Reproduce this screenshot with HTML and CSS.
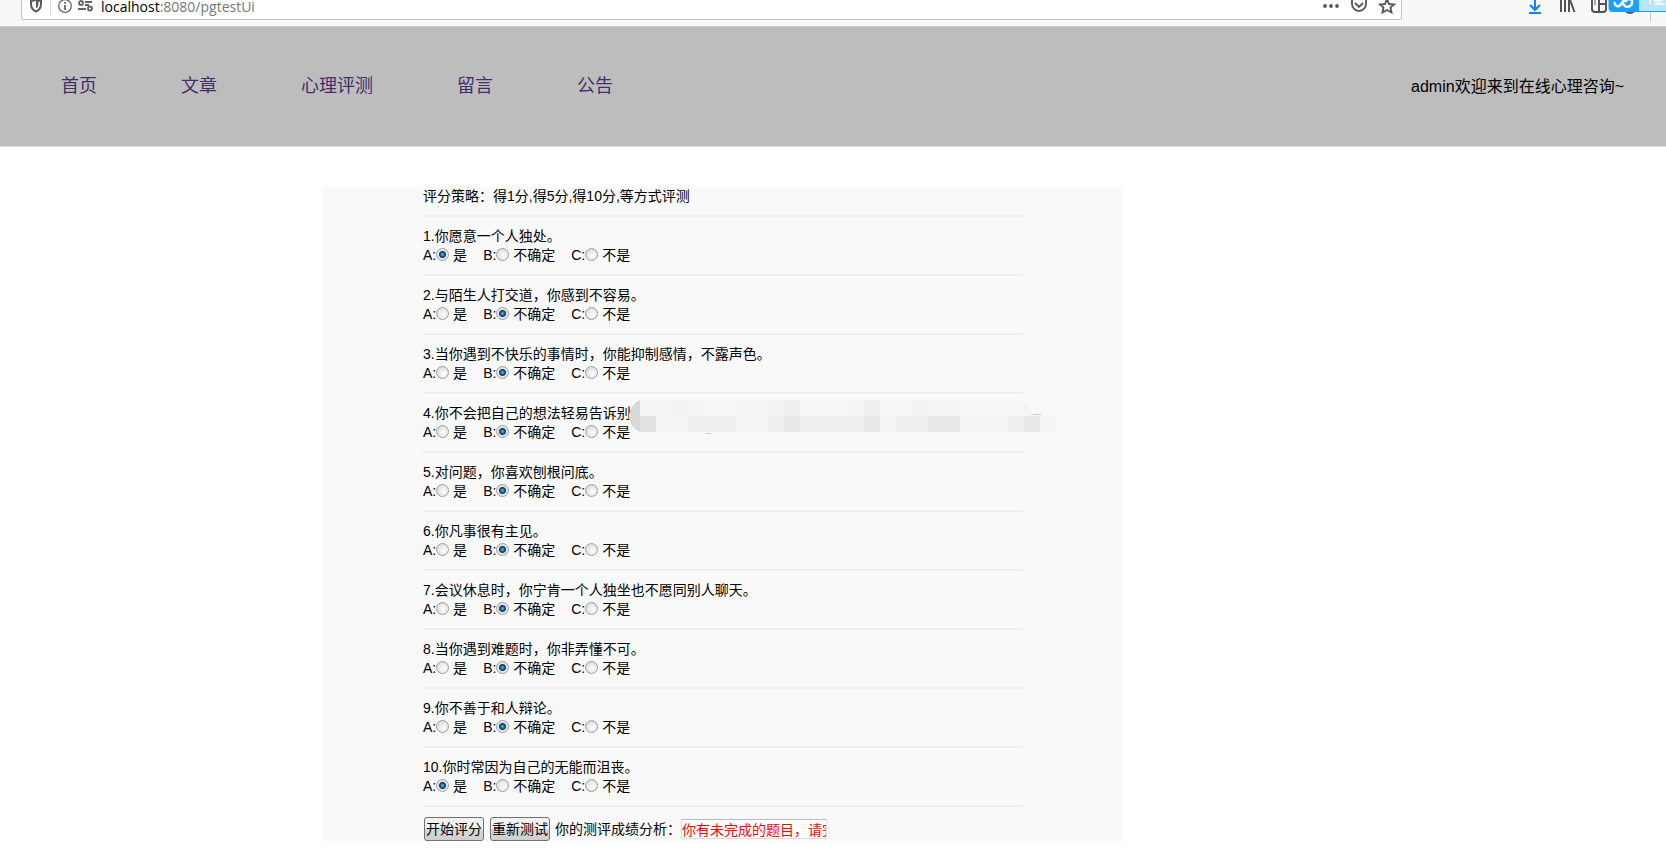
FILE: index.html
```
<!DOCTYPE html>
<html lang="zh-CN">
<head>
  <meta charset="UTF-8" />
  <meta name="viewport" content="width=device-width, initial-scale=1.0"/>
  <title>心理评测</title>
  <link rel="stylesheet" href="styles.css">
</head>
<body>

  <div class="toolbar">
    <div class="address">
      <svg class="icon" viewBox="0 0 30 20" width="30" height="20" fill="none" stroke="#5a5a5a" stroke-width="2">
        <path d="M9 1V4Q9 9.500 14 11.500Q19 9.500 19 4V1Q16 1 14-1Q12 1 9 1Z"/>
        <path d="M14 1V8.500Q16.500 7 16.500 3V1Z" fill="#5a5a5a" stroke="none"/>
        <path d="M28.500 0V16" stroke="#ddd" stroke-width="1"/>
      </svg>
      <svg class="icon" viewBox="0 0 49 20" width="49" height="20" fill="none" stroke="#666">
        <circle cx="13" cy="6" r="6.300" stroke-width="1.300"/>
        <path d="M13 5V10M13 2V3.700" stroke-width="1.800"/>
        <g stroke-width="1.900">
          <circle cx="29" cy="3" r="2"/>
          <path d="M33 2H40M33 5H37M26 9H34"/>
          <circle cx="38" cy="8.500" r="2"/>
        </g>
      </svg>
      <span class="url"><b>localhost</b>:8080/pgtestUi</span>
      <svg class="icon actions" viewBox="0 0 84 20" width="84" height="20" fill="none" stroke="#5a5a5a" stroke-width="1.900">
        <g fill="#5a5a5a" stroke="none">
          <circle cx="8" cy="6" r="1.900"/><circle cx="14" cy="6" r="1.900"/><circle cx="20" cy="6" r="1.900"/>
        </g>
        <path d="M35-1V4A7 7 0 0 0 49 4V-1M38 3L42 7L46 3"/>
        <path d="M70-1L72 4L77 4.500L73.500 7.500L74.500 12.500L70 10L65.500 12.500L66.500 7.500L63 4.500L68 4Z"/>
      </svg>
    </div>
    <svg class="icon" viewBox="0 0 146 26" width="146" height="26" fill="none" stroke="#555" stroke-width="2">
      <path d="M15 0V9M10 5L15 10L20 5M9 13H21" stroke="#0a84ff"/>
      <path d="M41 0V12M45 0V12M49 0V12M50 0L54.500 12"/>
      <path d="M72-1V9Q72 12 75 12H83Q86 12 86 9V-1M79 0V12M79 4H86"/>
      <path d="M75 0V5" stroke="#aaa"/>
      <path d="M106 11.500A7 7 0 0 0 114 11.500"/>
      <path d="M130.500 10V22" stroke="#ccc" stroke-width="1"/>
      <rect x="89" y="-6" width="70" height="17.500" rx="3" fill="#b9e6ff" stroke="#1e9fff" stroke-width="1"/>
      <path d="M119-1V11H92Q89 11 89 8V-1Z" fill="#1e9fff" stroke="none"/>
      <path d="M95 2A3 3 0 0 0 101 4L105-1M103 3A4.500 4.500 0 0 0 112 1.500Q112-1 109-1Q107-1 105 2" stroke="#fff" stroke-width="2.500"/>
      <path d="M130 0V4M134 1H142M134 4H145M138 0V4" stroke="#fff" stroke-width="1.500"/>
    </svg>
  </div>

  <header>
    <nav>
      <a href="#">首页</a>
      <a href="#">文章</a>
      <a href="#">心理评测</a>
      <a href="#">留言</a>
      <a href="#">公告</a>
    </nav>
    <p class="welcome">admin欢迎来到在线心理咨询~</p>
  </header>

  <form class="container">
    <p>评分策略：得1分,得5分,得10分,等方式评测</p>
    <hr>

    <div class="question">
      <p>1.你愿意一个人独处。</p>
      <div class="options">
        <label>A:<input type="radio" name="q1" value="1" checked> 是</label>
        <label>B:<input type="radio" name="q1" value="5"> 不确定</label>
        <label>C:<input type="radio" name="q1" value="10"> 不是</label>
      </div>
    </div>
    <hr>

    <div class="question">
      <p>2.与陌生人打交道，你感到不容易。</p>
      <div class="options">
        <label>A:<input type="radio" name="q2" value="1"> 是</label>
        <label>B:<input type="radio" name="q2" value="5" checked> 不确定</label>
        <label>C:<input type="radio" name="q2" value="10"> 不是</label>
      </div>
    </div>
    <hr>

    <div class="question">
      <p>3.当你遇到不快乐的事情时，你能抑制感情，不露声色。</p>
      <div class="options">
        <label>A:<input type="radio" name="q3" value="1"> 是</label>
        <label>B:<input type="radio" name="q3" value="5" checked> 不确定</label>
        <label>C:<input type="radio" name="q3" value="10"> 不是</label>
      </div>
    </div>
    <hr>

    <div class="question">
      <p>4.你不会把自己的想法轻易告诉别</p>
      <svg class="mosaic" viewBox="0 0 430 34" width="430" height="34" shape-rendering="crispEdges">
        <path d="M12 0H384Q401 0 405 16H428V32H12L2 22V8Z" fill="#f4f4f4"/>
        <path d="M12 0V32Q2 28 1 16Q2 4 12 0Z" fill="#d8dada"/>
        <path d="M12 16H28V32H12Z" fill="#e2e2e2"/>
        <path d="M44 0H60V16H44ZM140 0H156V16H140ZM284 0H300V16H284Z" fill="#f2f2f2"/>
        <path d="M156 0H172V16H156ZM236 0H252V16H236Z" fill="#eeeeee"/>
        <path d="M76 0H108V16H76ZM172 0H220V16H172ZM252 0H284V16H252ZM332 0H384Q396 1 398 16H332Z" fill="#f7f7f7"/>
        <path d="M60 16H108V32H60ZM140 16H156V32H140ZM172 16H236V32H172ZM268 16H300V32H268ZM380 16H396V32H380Z" fill="#efefef"/>
        <path d="M156 16H172V32H156ZM236 16H252V32H236ZM300 16H332V32H300ZM396 16H412V32H396Z" fill="#e8e8e8"/>
        <path d="M78 33H83M405 14H413" stroke="#ccc"/>
      </svg>
      <div class="options">
        <label>A:<input type="radio" name="q4" value="1"> 是</label>
        <label>B:<input type="radio" name="q4" value="5" checked> 不确定</label>
        <label>C:<input type="radio" name="q4" value="10"> 不是</label>
      </div>
    </div>
    <hr>

    <div class="question">
      <p>5.对问题，你喜欢刨根问底。</p>
      <div class="options">
        <label>A:<input type="radio" name="q5" value="1"> 是</label>
        <label>B:<input type="radio" name="q5" value="5" checked> 不确定</label>
        <label>C:<input type="radio" name="q5" value="10"> 不是</label>
      </div>
    </div>
    <hr>

    <div class="question">
      <p>6.你凡事很有主见。</p>
      <div class="options">
        <label>A:<input type="radio" name="q6" value="1"> 是</label>
        <label>B:<input type="radio" name="q6" value="5" checked> 不确定</label>
        <label>C:<input type="radio" name="q6" value="10"> 不是</label>
      </div>
    </div>
    <hr>

    <div class="question">
      <p>7.会议休息时，你宁肯一个人独坐也不愿同别人聊天。</p>
      <div class="options">
        <label>A:<input type="radio" name="q7" value="1"> 是</label>
        <label>B:<input type="radio" name="q7" value="5" checked> 不确定</label>
        <label>C:<input type="radio" name="q7" value="10"> 不是</label>
      </div>
    </div>
    <hr>

    <div class="question">
      <p>8.当你遇到难题时，你非弄懂不可。</p>
      <div class="options">
        <label>A:<input type="radio" name="q8" value="1"> 是</label>
        <label>B:<input type="radio" name="q8" value="5" checked> 不确定</label>
        <label>C:<input type="radio" name="q8" value="10"> 不是</label>
      </div>
    </div>
    <hr>

    <div class="question">
      <p>9.你不善于和人辩论。</p>
      <div class="options">
        <label>A:<input type="radio" name="q9" value="1"> 是</label>
        <label>B:<input type="radio" name="q9" value="5" checked> 不确定</label>
        <label>C:<input type="radio" name="q9" value="10"> 不是</label>
      </div>
    </div>
    <hr>

    <div class="question">
      <p>10.你时常因为自己的无能而沮丧。</p>
      <div class="options">
        <label>A:<input type="radio" name="q10" value="1" checked> 是</label>
        <label>B:<input type="radio" name="q10" value="5"> 不确定</label>
        <label>C:<input type="radio" name="q10" value="10"> 不是</label>
      </div>
    </div>
    <hr>

    <div class="result">
      <button type="button">开始评分</button>
      <button type="reset">重新测试</button>
      <div class="score">
        <label for="score">你的测评成绩分析：</label>
        <input type="text" id="score" value="你有未完成的题目，请完成">
      </div>
    </div>
  </form>

</body>
</html>
```
FILE: styles.css
```
* {
  box-sizing: border-box;
}

body {
  font-family: "Liberation Sans", "Noto Sans CJK SC", sans-serif;
  font-size: 14px;
  line-height: 19px;
  margin: 0;
  background: #fff;
  color: #000;
}

p {
  margin: 0;
}

/* browser bar */
.toolbar {
  display: flex;
  height: 27px;
  padding-left: 21px;
  background: #f8f8f8;
  border-bottom: 1px solid #ccc;
}

.address {
  display: flex;
  flex: 1;
  height: 20px;
  margin-right: 118px;
  background: #fff;
  border: 1px solid #c4c4c4;
  border-top: none;
  border-radius: 0 0 2px 2px;
}

.icon {
  flex: none;
}

.actions {
  margin-left: auto;
}

.url {
  font-family: "Open Sans", sans-serif;
  font-size: 14px;
  line-height: 13px;
  color: #777;
}

.url b {
  font-weight: normal;
  color: #000;
}

/* navigation */
header {
  display: flex;
  align-items: center;
  justify-content: space-between;
  height: 120px;
  padding: 0 42px 0 21px;
  background: #bdbdbd;
  border-bottom: 1px solid #ddd;
}

nav {
  display: flex;
  gap: 4px;
  font-size: 18px;
}

nav a {
  padding: 0 40px;
  color: #432d6b;
  text-decoration: none;
}

.welcome {
  font-size: 16px;
}

/* test form */
.container {
  width: 800px;
  max-width: 100%;
  margin: 40px 0 0 323px;
  padding: 0 100px;
  background: #f9f9f9;
}

hr {
  height: 2px;
  margin: 9px 0 10px;
  border: none;
  background: #eee;
}

.question {
  position: relative;
}

.options {
  display: flex;
  gap: 16px;
}

.options label {
  display: flex;
  align-items: center;
  white-space: pre;
}

input[type="radio"] {
  appearance: none;
  width: 13px;
  height: 13px;
  margin: 0 0 2px;
  border: 1px solid #a0a0a0;
  border-radius: 50%;
  background: radial-gradient(circle at 60% 60%, #fff, #d0d0d0);
}

input[type="radio"]:checked {
  background: radial-gradient(circle, #5fc4ee 0, #17608f 2px, #123a58 3px, #e4e4e4 4px);
}

/* blurred out end of the sentence */
.mosaic {
  position: absolute;
  top: -4px;
  left: 205px;
}

.result {
  display: flex;
  align-items: center;
  gap: 5px;
  height: 24px;
}

.score {
  display: flex;
  align-items: center;
}

button {
  height: 24px;
  margin-left: 1px;
  padding: 0 1px;
  border: 1px solid #707070;
  border-radius: 3px;
  background: linear-gradient(#f2f2f2 50%, #d8d8d8 50%, #cfcfcf);
  color: #000;
  font: inherit;
}

input[type="text"] {
  width: 146px;
  height: 20px;
  padding: 0;
  border: 1px solid #dadde2;
  border-top-color: #b8bcc4;
  background: #fff;
  color: #f00;
  font: inherit;
}
```
